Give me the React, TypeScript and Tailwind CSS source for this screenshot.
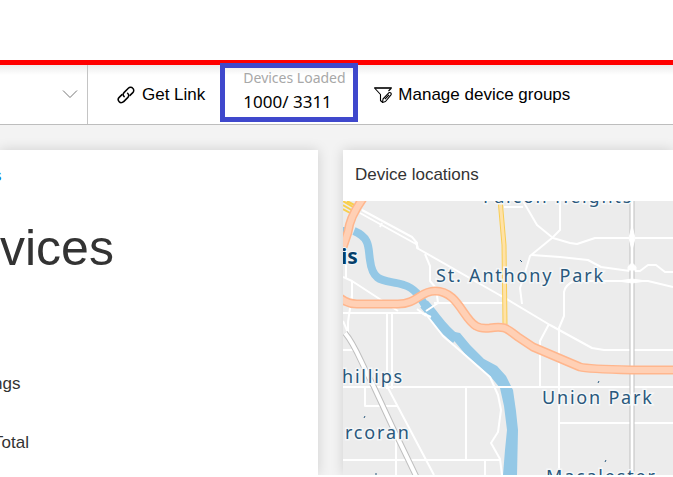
import React from 'react';

function LinkIcon() {
  return (
    <svg className="size-[18px] shrink-0" viewBox="0 0 18 18" fill="none" stroke="currentColor" strokeWidth="1.5" strokeLinecap="round" aria-hidden="true">
      <path d="M7.2 10.6C5.8 9.4 5.8 7.8 7 6.600L11.300 2.300C12.500 1.100 14.600 1 15.800 2.200C17.100 3.400 17 5.400 15.800 6.600L13 9.400" />
      <path d="M10.600 7.300C12 8.500 12 10.300 10.900 11.400L6.700 15.600C5.500 16.900 3.400 17 2.200 15.700C1 14.500 1 12.600 2.200 11.400L5 8.600" />
    </svg>
  );
}

function FilterEditIcon() {
  return (
    <svg className="size-[18px] shrink-0" viewBox="0 0 18 18" fill="none" stroke="currentColor" strokeWidth="1.1" strokeLinejoin="round" aria-hidden="true">
      <path d="M.5 1.500H17.500V2.500H.5Z" strokeWidth="0.800" />
      <path d="M1 2.500L6.500 8.500V14.500L8 16M17 2.500L14.500 5" />
      <path d="M8.500 16.500L9 13L14.800 6.800Q16 6 17 7.200Q17.600 8.300 16.800 9.200L11.500 15.500ZM11 13.200L15 8.800" />
    </svg>
  );
}

function Toolbar() {
  return (
    <div className="flex h-[60px] border-b border-[#bdbdbd] bg-white bg-linear-to-b from-[#ececec] to-white to-[10px] text-[17px] text-black">
      <div className="relative w-[88px] shrink-0 border-r border-[#c4c4c4]">
        <select aria-label="Device group" className="h-full w-full appearance-none bg-transparent outline-none">
          <option value="" />
        </select>
        <svg className="pointer-events-none absolute right-[9px] top-[24px] h-[10px] w-[16px]" viewBox="0 0 16 10" fill="none" stroke="#777" aria-hidden="true">
          <path d="M1 1.500L8 8.500L15 1.500" />
        </svg>
      </div>
      <button className="ml-[29px] flex shrink-0 items-center gap-[7px]">
        <LinkIcon />
        Get Link
      </button>
      <div className="relative -mt-[2px] ml-[15px] h-[59px] w-[138px] shrink-0 border-[5px] border-[#3f48cc] pl-[18px] font-['Noto_Sans','Open_Sans',sans-serif]">
        <div className="text-[14px] leading-5 whitespace-nowrap text-[#a8a8a8]">Devices Loaded</div>
        <div className="text-[17px] leading-7 whitespace-nowrap">1000/ 3311</div>
      </div>
      <button className="ml-4 flex items-center gap-[6px] whitespace-nowrap">
        <FilterEditIcon />
        Manage device groups
      </button>
    </div>
  );
}

const streets = [
  'M360 213L416 244Q419 247 417 249M362 210L412 237L417 243V248L503 297',
  'M382 223L380 227M425 254L430 266V281L436 288L438 303L426 311',
  'M343 277L352 281L398 311M352 281V302M346 245V278M343 313H422L431 317',
  'M387 313V389M392 313V389M417 309L426 316M434 303H503',
  'M343 350H355M343 387H673M365 388V406H397M388 388L434 475',
  'M396 441V475M466 388V460',
  'M343 460H501M485 460V475M352 295L348 322V334M343 321L349 335',
  'M523 201L537 225L553 238L570 243L577 244L595 238H673',
  'M560 201V230L552 238L530 256L524 276L520 288L522 304',
  'M504 207H523M500 295L550 325L592 348L604 350H673',
  'M532 255L560 257L588 260L601 267L630 271H640L648 265H656L665 272H673',
  'M673 287L648 281H574Q565 285 564 292V316L559 328V475M549 324L540 341V387',
  'M559 423H673',
];

const riverside = 'M425 313L443 336L465 355L490 377L498 395L501 410L498 432L491 443L500 459L502 475';

function DeviceMap() {
  return (
    <svg
      className="h-full w-full font-['Noto_Sans','Open_Sans',sans-serif]"
      viewBox="343 201 330 274"
      preserveAspectRatio="xMinYMin slice"
      role="img"
      aria-label="Map of device locations"
    >
      <rect x="343" y="201" width="330" height="274" fill="#ececec" />
      <g fill="none" strokeLinejoin="round">
        <path d="M338 231H346M354 231C371 238 368 249 370 260C373 286 388 279 404 285C421 290 423 307 435 319Q441 328 452 336" stroke="#94c8e6" strokeWidth="8" />
        <path d="M424 304C437 318 442 329 456 339" stroke="#94c8e6" strokeWidth="10" />
        <path d="M445 330L460 333L470 345L484 359L497 366L506 376L513 390L516 411L518 430L517 475H503L505 450L507 430L504 406L500 388L491 377L466 355Z" fill="#94c8e6" />
        {streets.map((d) => (
          <path key={d} d={d} stroke="#fff" strokeWidth="2" />
        ))}
        <path d={riverside} stroke="#fff" strokeWidth="2" />
        <path d="M345 333C356 346 360 361 373 385L393 428L417 478" stroke="#bfbfbf" strokeWidth="6" />
        <path d="M345 333C356 346 360 361 373 385L393 428L417 478" stroke="#fff" strokeWidth="4" />
        <path d="M632 201V475" stroke="#bfbfbf" strokeWidth="5" />
        <path d="M632 201V475" stroke="#fff" strokeWidth="3" />
        <path d="M632 226L635 238L632 250L629 238ZM628 270V267Q632 260 636 267V270ZM618 281L632 279L646 281L632 283Z" fill="#fff" stroke="#fff" />
        <path d="M343 201L358 210M343 205L355 212M343 209L352 214M347 201L358 207" stroke="#f8cf4e" strokeWidth="2" />
        <path d="M500 199L504 245L505 324" stroke="#f8cd55" strokeWidth="5" />
        <path d="M500 199L504 245L505 324" stroke="#ffe2a8" strokeWidth="3" />
        <path d="M364 197Q350 216 348 232L343 247" stroke="#ffb68d" strokeWidth="9" />
        <path d="M364 197Q350 216 348 232L343 247" stroke="#ffd0b5" strokeWidth="6" />
        <path d="M340 298Q348 304 357 304H398C417 304 420 291 435 291C458 291 463 319 476 326Q481 329 490 328C506 325 508 330 518 337L533 347L580 367Q587 369 632 370H676" stroke="#ffb68d" strokeWidth="9" />
        <path d="M340 298Q348 304 357 304H398C417 304 420 291 435 291C458 291 463 319 476 326Q481 329 490 328C506 325 508 330 518 337L533 347L580 367Q587 369 632 370H676" stroke="#ffd0b5" strokeWidth="6" />
        <path d="M520 260L522 262M598 383L599 381M605 462L606 460M364 418L365 416M376 475V473" stroke="#29587c" />
      </g>
      <g className="text-[18px] tracking-widest" fill="#29587c" stroke="#f5f7f8" strokeWidth="3" paintOrder="stroke">
        <text x="483" y="203">Falcon Heights</text>
        <text x="436" y="282">St. Anthony Park</text>
        <text x="342" y="383">hillips</text>
        <text x="345" y="439">rcoran</text>
        <text x="542" y="404">Union Park</text>
        <text x="546" y="483">Macalester</text>
      </g>
      <text className="text-[21px] font-bold" x="341" y="264" fill="#053f6b" stroke="#f5f7f8" strokeWidth="2" paintOrder="stroke">is</text>
    </svg>
  );
}

export default function App() {
  return (
    <div className="overflow-hidden bg-white font-['Liberation_Sans',Arial,sans-serif] text-[17px] text-[#333]">
      <header className="h-[65px] border-b-[5px] border-[#ff0000] bg-white" />
      <Toolbar />
      <main className="mb-[2px] flex gap-[25px] overflow-hidden bg-[#f3f3f3] pt-[25px]">
        <section className="w-[318px] shrink-0 bg-white shadow-[0_0_12px_rgba(0,0,0,0.15)]">
          <div className="-ml-[7px] pt-[14px]">
            <a href="#devices" className="block leading-6 text-[#0078d4]">s</a>
            <h1 className="mt-7 pl-[7px] text-[50px] leading-[64px]">vices</h1>
            <p className="mt-[92px] leading-6">ngs</p>
            <p className="mt-[35px] leading-6">Total</p>
          </div>
        </section>
        <section className="flex h-[325px] min-w-0 flex-1 flex-col bg-white shadow-[0_0_12px_rgba(0,0,0,0.15)]">
          <h2 className="h-[51px] shrink-0 px-3 leading-[50px]">Device locations</h2>
          <div className="min-h-0 flex-1">
            <DeviceMap />
          </div>
        </section>
      </main>
    </div>
  );
}
